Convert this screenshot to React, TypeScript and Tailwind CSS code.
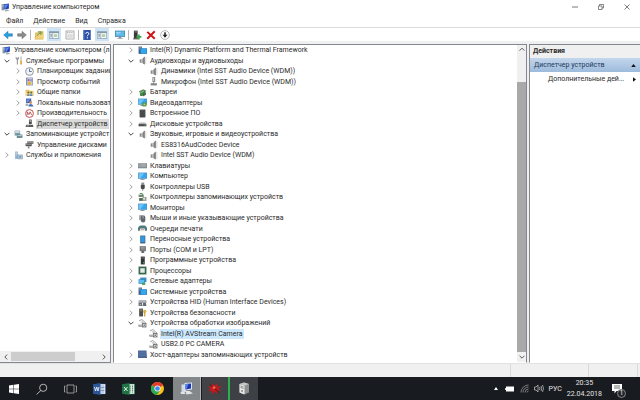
import type { ReactNode } from 'react';

type IconName = keyof typeof icons;

type TreeItem = {
  label: string;
  icon: IconName;
  level: number;
  state?: 'open' | 'closed';
  selected?: boolean;
};

const screen = (
  <>
    <path d="M0 1h16v11H0z" fill="#5d8fb5" />
    <path d="M1 2h14v9H1z" fill="#35a5ee" />
    <path d="M1 2h10L4 11H1z" fill="#6cc4fa" />
    <path d="M6 12h4v1H6zM4 13h8v1H4z" fill="#8b98a3" />
  </>
);

const speaker = (
  <>
    <path d="M3 6h3v6H3z" fill="#8a8a8a" />
    <path d="M6 6l6-5v14l-6-3z" fill="#a9a9a9" />
    <path d="M9 4l3-3v14l-3-2z" fill="#7f7f7f" />
    <path d="M14 2v12" stroke="#c4c4c4" strokeWidth="1.2" fill="none" />
  </>
);

const camera = (
  <>
    <path d="M2 3l5-2 7 6" fill="none" stroke="#777" strokeWidth="1.2" />
    <path d="M4 5l4-2 4 4H7z" fill="#d0d0d0" />
    <path d="M0 11h7M1 13h6" stroke="#666" strokeWidth="1.2" />
    <path d="M7 7h8v8H7z" fill="#747474" />
    <circle cx="11" cy="11" r="2.6" fill="#e4e4e4" />
    <circle cx="11" cy="11" r="1.2" fill="#333" />
  </>
);

const icons = {
  computer: (
    <>
      <path d="M1 2h5v11H1z" fill="#8793a3" />
      <path d="M2 4h3M2 6h3" stroke="#dce3ea" />
      <path d="M5 2l9-1v9l-9 1z" fill="#1b3fb0" />
      <path d="M6 3l7-1-5 8H6z" fill="#5f86e8" />
      <path d="M7 11h4l4 3-8 1z" fill="#a6adb8" />
    </>
  ),
  tools: (
    <>
      <path d="M3 1v4l2 2v8h2V7l2-2V1L7 3H5z" fill="#9b9b9b" />
      <path d="M11 1h3v7h-3z" fill="#c9cdd2" />
      <path d="M11 8h3v7h-3z" fill="#d9a53a" />
    </>
  ),
  clock: (
    <>
      <circle cx="8" cy="8" r="7" fill="#f2f5f8" stroke="#7c8894" strokeWidth="1.5" />
      <path d="M8 3v5h4" fill="none" stroke="#3d5f8c" strokeWidth="1.5" />
      <path d="M3 8h1M8 13v-1" stroke="#888" />
    </>
  ),
  events: (
    <>
      <path d="M2 1h12v14H2z" fill="#7384a8" />
      <path d="M4 2h9v12H4z" fill="#c7d5ef" />
      <path d="M5 4h3v3H5z" fill="#d23a2e" />
      <path d="M9 5h4M9 7h4" stroke="#3d62b5" />
      <path d="M5 9l4-1 3 3-3 3H5z" fill="#e3b530" />
    </>
  ),
  shared: (
    <>
      <path d="M1 3h6l1 2h7v9H1z" fill="#e3bf58" />
      <path d="M2 6h13v8H2z" fill="#f3d987" />
      <circle cx="6" cy="8" r="2" fill="#7a6034" />
      <circle cx="11" cy="8" r="2" fill="#557a4a" />
      <path d="M4 14v-3h4v3zM9 14v-3h4v3z" fill="#5b84bd" />
    </>
  ),
  users: (
    <>
      <path d="M2 1h9v8H2z" fill="#2e4da8" />
      <path d="M3 2h7L5 8H3z" fill="#6c8fe0" />
      <circle cx="10" cy="8" r="2.5" fill="#c89261" />
      <path d="M6 15c0-6 8-6 9 0z" fill="#3c70bd" />
      <path d="M1 10h5v4H1z" fill="#a4a9b0" />
    </>
  ),
  performance: (
    <>
      <circle cx="8" cy="8" r="7" fill="#fff" stroke="#c13c3c" strokeWidth="1.6" />
      <path d="M4 11V5l3 5 2-5 3 6" fill="none" stroke="#a53434" strokeWidth="1.3" />
    </>
  ),
  deviceManager: (
    <>
      <path d="M7 1h5v8H7z" fill="#484848" />
      <path d="M8 2h3v3H8z" fill="#b3b3b3" />
      <path d="M2 10h12l1 4H1z" fill="#5a5a5a" />
      <path d="M3 12h4" stroke="#d4d4d4" />
    </>
  ),
  storage: (
    <>
      <path d="M1 1h10v9H1z" fill="#8fa3b0" />
      <path d="M2 2h8v3H2z" fill="#d5e4ec" />
      <path d="M2 7h8" stroke="#4b9a8f" />
      <path d="M5 8h10v6H5z" fill="#5f7888" />
      <path d="M6 9h8v2H6z" fill="#a9d5df" />
      <path d="M11 12h3v1h-3z" fill="#4fe07a" />
    </>
  ),
  disks: (
    <>
      <path d="M4 2h11v5H4z" fill="#777" />
      <path d="M5 3h9v1H5z" fill="#c9c9c9" />
      <path d="M1 6h11v5H1z" fill="#555" />
      <path d="M2 7h9v1H2z" fill="#bbb" />
      <path d="M5 11h3v4H5z" fill="#8a8a8a" />
    </>
  ),
  services: (
    <>
      <path d="M2 1h5v13H2z" fill="#8fb0ce" />
      <path d="M3 3h3M3 5h3M3 7h3" stroke="#e8f1f8" />
      <path d="M7 7h8v7H7z" fill="#c3d2de" stroke="#6f8fad" />
      <circle cx="11" cy="10.5" r="2" fill="#6b9ac4" />
    </>
  ),
  system: (
    <>
      <path d="M1 1h6v13H1z" fill="#46617a" />
      <path d="M2 3h4M2 5h4" stroke="#a8c7dd" />
      <path d="M4 4h12v10H4z" fill="#2380c2" />
      <path d="M5 5h10v8H5z" fill="#35a5ee" />
    </>
  ),
  speaker,
  mic: (
    <>
      <path d="M6 0h5v9H6z" fill="#8b8b8b" />
      <path d="M7 1h2v6H7z" fill="#ccc" />
      <path d="M8 9h1v3H8z" fill="#666" />
      <path d="M3 11h11v4H3z" fill="#858585" />
    </>
  ),
  battery: (
    <>
      <path d="M1 6l8-4 6 3-7 5z" fill="#7d8878" />
      <path d="M3 8l8-5 3 4-6 7H4z" fill="#38883d" />
      <path d="M4 9l7-4" stroke="#a7d6a3" strokeWidth="1.4" />
      <path d="M9 10l5-2v4l-5 3z" fill="#4f5650" />
    </>
  ),
  display: (
    <>
      {screen}
      <path d="M8 8h7v7H8z" fill="#3f9850" />
      <path d="M10 10h3v3h-3z" fill="#e5c84b" />
    </>
  ),
  chip: (
    <>
      <path d="M3 1h10v14H3z" fill="#3d3d3d" />
      <path d="M2 3h12M2 6h12M2 9h12M2 12h12" stroke="#777" />
      <path d="M5 3h6v10H5z" fill="#4a4a4a" />
    </>
  ),
  drive: (
    <>
      <path d="M3 6h10l2 3H1z" fill="#b5b5b5" />
      <path d="M1 9h14v4H1z" fill="#4d4d4d" />
      <path d="M11 10h3v1h-3z" fill="#87d68c" />
    </>
  ),
  keyboard: (
    <>
      <path d="M0 4h16v9H0z" fill="#858b90" />
      <path d="M1 6h14M1 8h14M1 10h14" stroke="#c9cdd0" strokeDasharray="1.5 .5" />
    </>
  ),
  screen,
  usb: (
    <>
      <path d="M6 1h5v4H6z" fill="#8d8d8d" />
      <path d="M5 5h7v6l-2 2H7l-2-2z" fill="#484848" />
      <path d="M8 13h1v3H8z" fill="#555" />
    </>
  ),
  storageController: (
    <>
      <path d="M1 3h9v4H1z" fill="#74806f" />
      <path d="M3 1c4-1 6 1 6 5" fill="none" stroke="#4d9a4f" strokeWidth="1.8" />
      <path d="M2 9h7v5H2z" fill="#4f6b50" />
      <path d="M8 7h7v7H8z" fill="#909890" />
      <circle cx="11" cy="10" r="2" fill="#e1e5e1" />
    </>
  ),
  mouse: (
    <>
      <path d="M2 2h6v9H2z" fill="#a1a5aa" />
      <rect x="5" y="2" width="8" height="13" rx="4" fill="#62676d" />
      <path d="M9 2v6" stroke="#d9dde0" />
    </>
  ),
  printer: (
    <>
      <path d="M4 2h8v4H4z" fill="#c5cccc" />
      <path d="M0 6l3-3h10l3 3v6H0z" fill="#517b7a" />
      <path d="M4 8h8l1 5H3z" fill="#e9eeee" />
      <path d="M5 10h6" stroke="#c26152" />
    </>
  ),
  portable: (
    <>
      <path d="M4 1h9v14H4z" fill="#41576a" />
      <path d="M5 2h7v11H5z" fill="#2b9ae8" />
    </>
  ),
  port: (
    <>
      <path d="M3 2h11v9H3z" fill="#737373" />
      <path d="M5 4h7M5 7h7" stroke="#c9c9c9" />
      <path d="M6 11h5v3H6z" fill="#555" />
    </>
  ),
  software: (
    <>
      <path d="M5 1h7v14H5z" fill="#333" />
      <path d="M6 2h5v3H6z" fill="#5c5c5c" />
      <path d="M9 11h2v2H9z" fill="#52d46a" />
    </>
  ),
  cpu: (
    <>
      <path d="M1 1h14v14H1z" fill="#33694a" />
      <path d="M4 4h8v8H4z" fill="#e6e9e4" />
    </>
  ),
  network: (
    <>
      <path d="M4 1h11v8H4z" fill="#3c8cc4" />
      <path d="M1 4h11v8H1z" fill="#2b81bb" />
      <path d="M2 5h9v6H2z" fill="#5cc0f5" />
      <path d="M7 10h6v4H7z" fill="#4b9e5d" />
    </>
  ),
  hid: (
    <>
      <path d="M1 4h14v5H1z" fill="#9b9fa3" />
      <path d="M2 6h12" stroke="#e2e4e6" strokeDasharray="1.5 .8" />
      <path d="M1 9h6l1 5H1zM9 9h5l1 5H9z" fill="#676b6f" />
      <path d="M3 11h2v2H3z" fill="#ddd" />
    </>
  ),
  security: (
    <>
      <path d="M2 1h7v14H2z" fill="#4f4f4f" />
      <path d="M3 3h5M3 5h5" stroke="#989898" />
      <circle cx="12" cy="6" r="3" fill="#e0b23c" />
      <path d="M11 8h2v7h-2z" fill="#c4932a" />
    </>
  ),
  camera,
  hostAdapter: (
    <>
      <path d="M0 1h15l1 13H0z" fill="#4a6796" />
      <path d="M1 4h13M1 7h13M1 10h13" stroke="#6482b4" />
    </>
  ),
  back: <path d="M1 8l7-6v4h7v4H8v4z" fill="#2f9fdc" stroke="#1f78b4" strokeWidth=".8" />,
  forward: <path d="M15 8L8 2v4H1v4h7v4z" fill="#8b8b8b" stroke="#6a6a6a" strokeWidth=".8" />,
  folderUp: (
    <>
      <path d="M2 4h6l1-2h6v13H1z" fill="#d9b34c" />
      <path d="M3 6h12v8H2z" fill="#f1d27a" />
      <path d="M4 10l6-6M6 3h5v5" fill="none" stroke="#5aa04a" strokeWidth="1.6" />
    </>
  ),
  panel: (
    <>
      <path d="M0 2h16v12H0z" fill="#8998a5" />
      <path d="M1 5h14v8H1z" fill="#f4f7f9" />
      <path d="M6 5v8" stroke="#8998a5" />
      <path d="M2 7h3M2 9h3M2 11h3" stroke="#5c7386" />
      <path d="M8 7h5v4H8z" fill="#a8cfa0" />
    </>
  ),
  properties: (
    <>
      <path d="M1.500 1.500h13v13h-13z" fill="#f2f2f2" stroke="#8c8c8c" />
      <path d="M3 4h10M4 8h8M4 11h8" stroke="#999" strokeDasharray="2 1" />
    </>
  ),
  help: (
    <>
      <path d="M2 0h12v16H2z" fill="#2d52a8" />
      <path d="M3 0v16" stroke="#7d97d4" />
      <path d="M6 6c0-3 5-3 5 0 0 2-2.500 1.500-2.500 4M8.500 11.500v2" fill="none" stroke="#fff" strokeWidth="1.6" />
    </>
  ),
  scan: (
    <>
      <path d="M0 1h16v10H0z" fill="#4a7c9e" />
      <path d="M1 2h14v8H1z" fill="#5ebaea" />
      <path d="M2 4h7M2 6h5" stroke="#c4e8fb" />
      <path d="M6 11h4v2h3v1H3v-1h3z" fill="#7f909c" />
    </>
  ),
  enable: (
    <>
      <path d="M3 1h6v12H3z" fill="#3b3b3b" />
      <path d="M4 3h4" stroke="#aaa" />
      <path d="M2 13h8v2H2z" fill="#555" />
      <path d="M11 7v8M7 11h8" stroke="#33a544" strokeWidth="2.600" />
    </>
  ),
  remove: <path d="M2 3l12 11M14 2L2 14" stroke="#cf1418" strokeWidth="3.200" fill="none" />,
  update: (
    <>
      <circle cx="8" cy="8" r="7" fill="#fff" stroke="#8c8c8c" strokeWidth="1" />
      <path d="M8 3.500v7" stroke="#222" strokeWidth="2.400" />
      <path d="M4 7.500h8l-4 5z" fill="#222" />
    </>
  ),
};

const consoleTree: TreeItem[] = [
  { label: 'Управление компьютером (л', icon: 'computer', level: 0 },
  { label: 'Служебные программы', icon: 'tools', level: 1, state: 'open' },
  { label: 'Планировщик заданий', icon: 'clock', level: 2, state: 'closed' },
  { label: 'Просмотр событий', icon: 'events', level: 2, state: 'closed' },
  { label: 'Общие папки', icon: 'shared', level: 2, state: 'closed' },
  { label: 'Локальные пользоват', icon: 'users', level: 2, state: 'closed' },
  { label: 'Производительность', icon: 'performance', level: 2, state: 'closed' },
  { label: 'Диспетчер устройств', icon: 'deviceManager', level: 2, selected: true },
  { label: 'Запоминающие устройст', icon: 'storage', level: 1, state: 'open' },
  { label: 'Управление дисками', icon: 'disks', level: 2 },
  { label: 'Службы и приложения', icon: 'services', level: 1, state: 'closed' },
];

const deviceTree: TreeItem[] = [
  { label: 'Intel(R) Dynamic Platform and Thermal Framework', icon: 'system', level: 1, state: 'closed' },
  { label: 'Аудиовходы и аудиовыходы', icon: 'speaker', level: 1, state: 'open' },
  { label: 'Динамики (Intel SST Audio Device (WDM))', icon: 'speaker', level: 2 },
  { label: 'Микрофон (Intel SST Audio Device (WDM))', icon: 'mic', level: 2 },
  { label: 'Батареи', icon: 'battery', level: 1, state: 'closed' },
  { label: 'Видеоадаптеры', icon: 'display', level: 1, state: 'closed' },
  { label: 'Встроенное ПО', icon: 'chip', level: 1, state: 'closed' },
  { label: 'Дисковые устройства', icon: 'drive', level: 1, state: 'closed' },
  { label: 'Звуковые, игровые и видеоустройства', icon: 'speaker', level: 1, state: 'open' },
  { label: 'ES8316AudCodec Device', icon: 'speaker', level: 2 },
  { label: 'Intel SST Audio Device (WDM)', icon: 'speaker', level: 2 },
  { label: 'Клавиатуры', icon: 'keyboard', level: 1, state: 'closed' },
  { label: 'Компьютер', icon: 'screen', level: 1, state: 'closed' },
  { label: 'Контроллеры USB', icon: 'usb', level: 1, state: 'closed' },
  { label: 'Контроллеры запоминающих устройств', icon: 'storageController', level: 1, state: 'closed' },
  { label: 'Мониторы', icon: 'screen', level: 1, state: 'closed' },
  { label: 'Мыши и иные указывающие устройства', icon: 'mouse', level: 1, state: 'closed' },
  { label: 'Очереди печати', icon: 'printer', level: 1, state: 'closed' },
  { label: 'Переносные устройства', icon: 'portable', level: 1, state: 'closed' },
  { label: 'Порты (COM и LPT)', icon: 'port', level: 1, state: 'closed' },
  { label: 'Программные устройства', icon: 'software', level: 1, state: 'closed' },
  { label: 'Процессоры', icon: 'cpu', level: 1, state: 'closed' },
  { label: 'Сетевые адаптеры', icon: 'network', level: 1, state: 'closed' },
  { label: 'Системные устройства', icon: 'system', level: 1, state: 'closed' },
  { label: 'Устройства HID (Human Interface Devices)', icon: 'hid', level: 1, state: 'closed' },
  { label: 'Устройства безопасности', icon: 'security', level: 1, state: 'closed' },
  { label: 'Устройства обработки изображений', icon: 'camera', level: 1, state: 'open' },
  { label: 'Intel(R) AVStream Camera', icon: 'camera', level: 2, selected: true },
  { label: 'USB2.0 PC CAMERA', icon: 'camera', level: 2 },
  { label: 'Хост-адаптеры запоминающих устройств', icon: 'hostAdapter', level: 1, state: 'closed' },
];

const Icon = ({ name, className = 'size-[9px]' }: { name: IconName; className?: string }) => (
  <svg viewBox="0 0 16 16" className={`shrink-0 ${className}`} aria-hidden="true">
    {icons[name]}
  </svg>
);

const Chevron = ({ dir, className = 'size-1.5' }: { dir: 'up' | 'down' | 'left' | 'right'; className?: string }) => {
  const d = {
    up: 'M1 6l4-4 4 4',
    down: 'M1 3l4 4 4-4',
    left: 'M7 1L3 5l4 4',
    right: 'M3 1l4 4-4 4',
  }[dir];
  return (
    <svg viewBox="0 0 10 10" className={className} fill="none" stroke="currentColor" strokeWidth="1.6" aria-hidden="true">
      <path d={d} />
    </svg>
  );
};

const indents = ['pl-0.5', 'pl-1', 'pl-[15px]'];

const Tree = ({ items, label, selectedClass }: { items: TreeItem[]; label: string; selectedClass: string }) => (
  <ul role="tree" aria-label={label}>
    {items.map((item) => (
      <li
        key={item.label}
        role="treeitem"
        aria-selected={!!item.selected}
        className={`flex items-center gap-0.5 whitespace-nowrap odd:h-[10px] even:h-[11px] ${indents[item.level]}`}
      >
        {item.level > 0 && (
          <span className="flex w-2 shrink-0 items-center">
            {item.state && (
              <button
                aria-label={item.label}
                aria-expanded={item.state === 'open'}
                className={item.state === 'open' ? 'text-[#404040]' : 'text-[#999]'}
              >
                <Chevron dir={item.state === 'open' ? 'down' : 'right'} />
              </button>
            )}
          </span>
        )}
        <Icon name={item.icon} />
        <span className={`px-px ${item.selected ? selectedClass : ''}`}>{item.label}</span>
      </li>
    ))}
  </ul>
);

const ToolButton = ({ icon, label, pressed = false, className = '' }: { icon: IconName; label: string; pressed?: boolean; className?: string }) => (
  <button
    aria-label={label}
    className={`flex items-center justify-center ${pressed ? 'h-[13px] w-3.5 bg-[#cce4f7]' : 'size-3'} ${className}`}
  >
    <Icon name={icon} className="size-2.5" />
  </button>
);

const Separator = () => <span className="h-2.5 w-px bg-[#b5b5b5]" />;

const TaskButton = ({ label, className = '', children }: { label: string; className?: string; children: ReactNode }) => (
  <button aria-label={label} className={`flex h-full w-7 items-center justify-center ${className}`}>
    {children}
  </button>
);

const Taskbar = () => (
  <footer className="flex h-[23px] shrink-0 items-center bg-[#181b20] text-[#e4e4e4]">
    <TaskButton label="Пуск">
      <svg viewBox="0 0 20 20" className="size-2.5" fill="#fff">
        <path d="M0 3l9-1.300V9.500H0zM10 1.500L20 0v9.500H10zM0 10.500h9v7.800L0 17zM10 10.500h10V20l-10-1.500z" />
      </svg>
    </TaskButton>
    <TaskButton label="Поиск">
      <svg viewBox="0 0 20 20" className="size-3" fill="none" stroke="#d0d0d0" strokeWidth="1.400">
        <circle cx="12" cy="8" r="6" />
        <path d="M8 12.500L1 19" />
      </svg>
    </TaskButton>
    <TaskButton label="Представление задач">
      <svg viewBox="0 0 26 20" className="h-2.5 w-[13px]" fill="none" stroke="#c4c4c4" strokeWidth="1.400">
        <path d="M6 2h14v16H6zM3 4H1v12h2M23 4h2v12h-2" />
      </svg>
    </TaskButton>
    <TaskButton label="Word" className="ml-px">
      <svg viewBox="0 0 26 24" className="h-3 w-[13px]">
        <path d="M12 2h13v20H12z" fill="#fff" stroke="#2b579a" />
        <path d="M15 6h8M15 9h8M15 12h8M15 15h8M15 18h8" stroke="#2b579a" strokeWidth="1.200" />
        <path d="M0 2.500L15 0v24L0 21.500z" fill="#2b579a" />
        <path d="M3 8l2 8 2.500-8L10 16l2-8" fill="none" stroke="#fff" strokeWidth="1.600" />
      </svg>
    </TaskButton>
    <TaskButton label="Excel" className="ml-px">
      <svg viewBox="0 0 26 24" className="h-3 w-[13px]">
        <path d="M12 2h13v20H12z" fill="#fff" stroke="#1f7244" />
        <path d="M16 5v14M21 5v14" stroke="#1f7244" strokeWidth="3" strokeDasharray="2.500 1.500" />
        <path d="M0 2.500L15 0v24L0 21.500z" fill="#1f7244" />
        <path d="M4 8l7 8M11 8l-7 8" stroke="#fff" strokeWidth="1.800" />
      </svg>
    </TaskButton>
    <TaskButton label="Chrome" className="ml-px">
      <svg viewBox="0 0 24 24" className="size-[13px]">
        <circle cx="12" cy="12" r="12" fill="#fbc116" />
        <path d="M12 12L1.600 6A12 12 0 0 1 22.400 6z" fill="#e33b2e" />
        <path d="M12 12L1.600 6A12 12 0 0 0 11 24l6-9z" fill="#2da94f" />
        <circle cx="12" cy="12" r="5.600" fill="#fff" />
        <circle cx="12" cy="12" r="4.300" fill="#4285f4" />
      </svg>
    </TaskButton>
    <TaskButton label="Управление компьютером" className="ml-0.5 border-r border-[#b5b5b5] bg-[#84878a]">
      <svg viewBox="0 0 28 26" className="h-[13px] w-3.5">
        <path d="M3 5h9v15H3z" fill="#d4dae2" />
        <path d="M9 2l15-1v14l-15 2z" fill="#dfe5ee" />
        <path d="M11 4l11-1v10l-11 2z" fill="#1736b5" />
        <path d="M11 4l6-.500-4 11-2 .300z" fill="#5b7ee6" />
        <path d="M11 18h8l7 5-13 2zM1 20h8l2 4H2z" fill="#e1e5ea" />
      </svg>
    </TaskButton>
    <TaskButton label="Диагностика" className="ml-px border-r-2 border-[#2fae4d] bg-[#414347]">
      <svg viewBox="0 0 28 26" className="h-[13px] w-3.5">
        <path d="M8 2l5 6 5-6 1 7 8-2-6 6 5 5-8-1 1 7-6-5-5 6-1-8-7 2 5-6-5-5 8 1z" fill="#c21a1a" />
        <path d="M3 4l20 18" stroke="#6e0f0f" strokeWidth="2" />
        <circle cx="12" cy="11" r="3" fill="#ea5a50" />
      </svg>
    </TaskButton>
    <TaskButton label="Системный блок" className="bg-[#3d4044]">
      <svg viewBox="0 0 24 26" className="h-[13px] w-3">
        <path d="M3 4l9-3 10 3v17l-9 4-10-4z" fill="#8f9293" />
        <path d="M3 4l10 3v18L3 21z" fill="#e7e8e8" />
        <path d="M3 4l9-3 10 3-9 3z" fill="#c6c8c8" />
        <path d="M5 8l6 2M5 11l6 2" stroke="#666" strokeWidth="1.400" />
        <circle cx="8" cy="18" r="1.600" fill="#444" />
      </svg>
    </TaskButton>

    {/* Tray */}
    <div className="ml-auto flex h-full items-center gap-[5px] pr-[18px]">
      <button aria-label="Скрытые значки" className="pr-0.5">
        <svg viewBox="0 0 8 6" className="h-[3px] w-1">
          <path d="M0 6l4-6 4 6z" fill="#fff" />
        </svg>
      </button>
      <svg viewBox="0 0 20 12" className="h-1.5 w-2.5">
        <path d="M2 1h16v10H2z" fill="#fff" />
        <path d="M0 4h2v4H0z" fill="#ddd" />
      </svg>
      <svg viewBox="0 0 18 18" className="size-[9px]" fill="none" stroke="#9a9da1" strokeWidth="1.500">
        <path d="M2 17A15 15 0 0 1 17 2M6 17A11 11 0 0 1 17 6M10 17a7 7 0 0 1 7-7M14 17a3 3 0 0 1 3-3" />
      </svg>
      <svg viewBox="0 0 20 18" className="h-[9px] w-2.5" fill="none" stroke="#cfcfcf" strokeWidth="1.400">
        <path d="M1 6h3l4-4v14l-4-4H1zM11 6q2 3 0 6M14 4q3 5 0 10M17 2q4 7 0 14" />
      </svg>
      <button>РУС</button>
      <div className="flex flex-col items-center leading-[11px]">
        <time>20:35</time>
        <time>22.04.2018</time>
      </div>
      <button aria-label="Уведомления" className="relative ml-[5px]">
        <svg viewBox="0 0 20 20" className="size-2.5">
          <path d="M0 0h20v14H9l-4 5v-5H0z" fill="#fff" />
          <path d="M4 4h12M4 8h12" stroke="#333" strokeWidth="1.400" />
        </svg>
        <span className="absolute -right-1 -bottom-1 flex size-[9px] items-center justify-center rounded-full border border-[#888] bg-[#222529] leading-none">
          1
        </span>
      </button>
    </div>
  </footer>
);

const App = () => {
  return (
    <div className="flex h-screen flex-col overflow-hidden bg-[#f0f0f0] font-['Roboto','Noto_Sans',sans-serif] text-[7px] leading-[10px] text-[#2a2a2a]">
      {/* Title bar */}
      <header className="flex h-3.5 shrink-0 items-center bg-white pl-px">
        <Icon name="computer" />
        <h1 className="pl-0.5">Управление компьютером</h1>
        <div className="ml-auto flex items-center gap-5 pr-2.5 text-[#555]">
          <button aria-label="Свернуть">
            <svg viewBox="0 0 12 12" className="size-1.5" stroke="currentColor" strokeWidth="1.600">
              <path d="M0 6h12" />
            </svg>
          </button>
          <button aria-label="Свернуть в окно">
            <svg viewBox="0 0 12 12" className="size-1.5" fill="none" stroke="currentColor" strokeWidth="1.400">
              <path d="M1 4h7v7H1zM3 4V1h8v7H8" />
            </svg>
          </button>
          <button aria-label="Закрыть">
            <svg viewBox="0 0 12 12" className="size-1.5" stroke="currentColor" strokeWidth="1.500">
              <path d="M1 1l10 10M11 1L1 11" />
            </svg>
          </button>
        </div>
      </header>

      {/* Menu */}
      <nav className="flex h-[13px] shrink-0 items-center gap-2.5 bg-white pl-1.5">
        <button>Файл</button>
        <button>Действие</button>
        <button>Вид</button>
        <button>Справка</button>
      </nav>

      {/* Toolbar */}
      <div role="toolbar" className="flex h-3.5 shrink-0 items-center gap-0.5 border-t border-[#dcdcdc] bg-white pl-0.5">
        <ToolButton icon="back" label="Назад" />
        <ToolButton icon="forward" label="Вперед" />
        <Separator />
        <ToolButton icon="folderUp" label="Вверх" />
        <ToolButton icon="panel" label="Дерево консоли" pressed />
        <ToolButton icon="properties" label="Свойства" className="ml-px" />
        <Separator />
        <ToolButton icon="help" label="Помощь" />
        <ToolButton icon="panel" label="Панель действий" pressed />
        <ToolButton icon="scan" label="Обновить конфигурацию" className="ml-[3px]" />
        <Separator />
        <ToolButton icon="enable" label="Включить устройство" />
        <ToolButton icon="remove" label="Удалить устройство" />
        <ToolButton icon="update" label="Обновить драйвер" />
      </div>

      {/* Panes */}
      <main className="mt-[3px] flex min-h-0 flex-1 gap-0.5">
        <section className="flex w-[111px] shrink-0 flex-col border border-l-0 border-[#828790] bg-white">
          <div className="flex-1 overflow-hidden">
            <Tree items={consoleTree} label="Дерево консоли" selectedClass="bg-[#d9d9d9]" />
          </div>
          <div className="flex h-[11px] items-center gap-0.5 bg-[#f0f0f0] px-[3px] text-[#505050]">
            <button aria-label="Влево">
              <Chevron dir="left" />
            </button>
            <span className="h-[9px] w-16 bg-[#cdcdcd]" />
            <button aria-label="Вправо" className="ml-auto">
              <Chevron dir="right" />
            </button>
          </div>
        </section>

        <section className="flex min-w-0 flex-1 border border-[#828790] border-b-white bg-white">
          <div className="flex-1 overflow-hidden pl-2.5">
            <Tree items={deviceTree} label="Устройства" selectedClass="bg-[#cce8ff]" />
          </div>
          <div className="flex w-[9px] flex-col items-center gap-[29px] bg-[#f0f0f0] py-0.5 text-[#505050]">
            <button aria-label="Вверх">
              <Chevron dir="up" />
            </button>
            <span className="-mb-[27px] w-full flex-1 bg-[#a9a9a9]" />
            <button aria-label="Вниз">
              <Chevron dir="down" />
            </button>
          </div>
        </section>

        <aside className="w-[111px] shrink-0 border border-r-0 border-[#828790] border-b-white bg-white">
          <h2 className="h-[13px] bg-[#f0f0f0] pt-px pl-[3px] font-bold">Действия</h2>
          <button className="flex h-3.5 w-full items-center justify-between bg-linear-to-b from-[#c3d6ec] to-[#9dbbdc] pr-1 pl-1 text-[#1e395b]">
            Диспетчер устройств
            <svg viewBox="0 0 12 8" className="h-[3px] w-[5px]" fill="#111">
              <path d="M0 8l6-8 6 8z" />
            </svg>
          </button>
          <button className="flex h-3.5 w-full items-center justify-between pr-1 pl-[18px]">
            Дополнительные дей...
            <svg viewBox="0 0 8 12" className="h-[5px] w-[3px]" fill="#111">
              <path d="M0 0l8 6-8 6z" />
            </svg>
          </button>
        </aside>
      </main>

      {/* Status bar */}
      <div className="flex h-3.5 shrink-0 border-t border-[#e2e2e2] pr-0.5">
        <span className="flex-1 border-r border-[#d9d9d9]" />
        <span className="w-[78px] border-r border-[#d9d9d9]" />
        <span className="w-[49px] border-r border-[#d9d9d9]" />
      </div>

      <Taskbar />
    </div>
  );
};

export default App;
